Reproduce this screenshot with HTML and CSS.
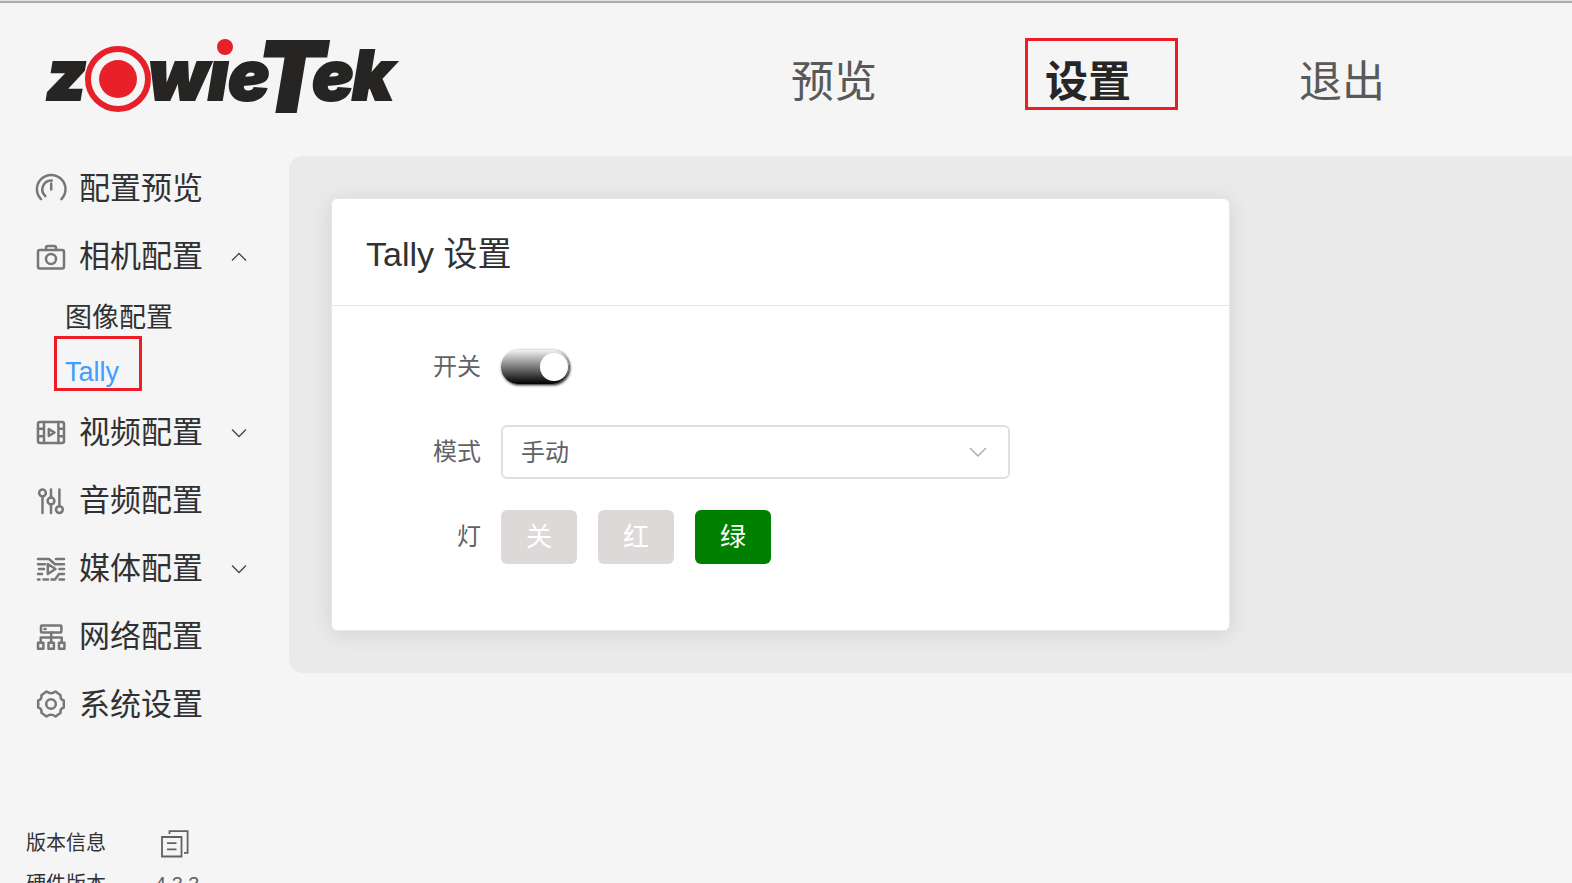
FILE: index.html
```html
<!DOCTYPE html>
<html lang="zh-CN">
<head>
<meta charset="utf-8">
<title>Tally 设置</title>
<link rel="stylesheet" href="styles.css">
</head>
<body>
<header class="header">
  <a class="logo" href="#" aria-label="ZowieTek">
    <svg width="356" height="86" viewBox="0 0 356 86">
      <text class="logo-letters" y="64"><tspan x="2">z</tspan><tspan x="104">w</tspan><tspan x="164">ı</tspan><tspan x="184">e</tspan><tspan class="logo-big" x="213" y="76">T</tspan><tspan x="268" y="64">e</tspan><tspan x="308">k</tspan></text>
      <circle cx="74" cy="43" r="30" fill="#f5f5f5" stroke="#e8202a" stroke-width="6"/>
      <circle cx="74" cy="43" r="19" fill="#e8202a"/>
      <circle cx="181" cy="11" r="8" fill="#e8202a"/>
    </svg>
  </a>
  <nav class="topnav">
    <a class="topnav-link" href="#">预览</a>
    <a class="topnav-link active" href="#">设置<span class="mark mark-top"></span></a>
    <a class="topnav-link" href="#">退出</a>
  </nav>
</header>
<div class="layout">
  <aside class="sidebar">
    <nav class="menu">
      <a class="menu-item" href="#">
        <svg class="icon" viewBox="0 0 32 32"><path d="M6 26.2A14.3 14.3 0 1 1 26.4 26.2M10.4 23.2A9 9 0 0 1 16.8 7.5M16.2 10.5V16.5"/></svg>
        <span>配置预览</span>
      </a>
      <a class="menu-item" href="#">
        <svg class="icon" viewBox="0 0 32 32"><rect x="3" y="9" width="26" height="18.5" rx="2"/><path d="M11 9V7q0-2 2-2h6q2 0 2 2v2"/><circle cx="16" cy="18" r="5"/></svg>
        <span>相机配置</span>
        <svg class="chevron" viewBox="0 0 16 16"><path d="M1 11.5L8 4.5L15 11.5"/></svg>
      </a>
      <div class="submenu">
        <a class="submenu-item" href="#">图像配置</a>
        <a class="submenu-item current" href="#">Tally<span class="mark mark-side"></span></a>
      </div>
      <a class="menu-item" href="#">
        <svg class="icon" viewBox="0 0 32 32"><rect x="3" y="5" width="26" height="21" rx="2"/><path d="M9 5V26M23.4 5V26M3 11.8H9M3 19.2H9M23.4 11.8H29M23.4 19.2H29M13.8 12V19L19.5 15.5Z"/></svg>
        <span>视频配置</span>
        <svg class="chevron" viewBox="0 0 16 16"><path d="M1 4.5L8 11.5L15 4.5"/></svg>
      </a>
      <a class="menu-item" href="#">
        <svg class="icon" viewBox="0 0 32 32"><circle cx="7.5" cy="8" r="3.4"/><path d="M7.5 11.4V28M16 4.5V12.6M16 19.4V28M24.4 4.5V21.3"/><circle cx="16" cy="16" r="3.4"/><circle cx="24.4" cy="24.6" r="3.4"/></svg>
        <span>音频配置</span>
      </a>
      <a class="menu-item" href="#">
        <svg class="icon" viewBox="0 0 32 32"><path d="M3 6H14L20 11.3H29M21 6H29M3 11.3H10M4 16H9M24.5 16H29M12.8 11V21L20.5 16ZM3 21H7M3 26.4H4.5M8.5 26.4H13M16.5 26.4H20L24 21H29M24.5 26.4H29"/></svg>
        <span>媒体配置</span>
        <svg class="chevron" viewBox="0 0 16 16"><path d="M1 4.5L8 11.5L15 4.5"/></svg>
      </a>
      <a class="menu-item" href="#">
        <svg class="icon" viewBox="0 0 32 32"><rect x="6" y="4.6" width="20.4" height="7" rx="1"/><path d="M9.5 8.1H10.5M16.2 11.6V21.6M5.7 21.6V16.4H26.7V21.6"/><rect x="3" y="21.8" width="5.4" height="6"/><rect x="13.5" y="21.8" width="5.4" height="6"/><rect x="24" y="21.8" width="5.4" height="6"/></svg>
        <span>网络配置</span>
      </a>
      <a class="menu-item" href="#">
        <svg class="icon" viewBox="-16 -15 32 32"><path d="M12.8 3.5Q8.8 4.6 9.6 8.8L4.6 12.4Q0 9-4.6 12.4L-9.6 8.8Q-8.8 4.6-12.8 3.5V-3.5Q-8.8-4.6-9.6-8.8L-4.6-12.4Q0-9 4.6-12.4L9.6-8.8Q8.8-4.6 12.8-3.5Z"/><circle r="4.8"/></svg>
        <span>系统设置</span>
      </a>
    </nav>
    <dl class="version">
      <div class="version-row">
        <dt>版本信息</dt>
        <dd>
          <button class="copy" type="button" aria-label="复制版本信息">
            <svg width="28" height="28" viewBox="0 0 28 28"><path d="M1 7H20.5V26.5H1ZM8.5 4V1.2H26.6V22.8H23M6 13.2H15.5M6 19.4H15.5"/></svg>
          </button>
        </dd>
      </div>
      <div class="version-row">
        <dt>硬件版本</dt>
        <dd>4.3.3</dd>
      </div>
    </dl>
  </aside>
  <main class="panel">
    <section class="card">
      <h1 class="card-title">Tally 设置</h1>
      <form class="form">
        <div class="row">
          <label class="label" for="power">开关</label>
          <input class="switch" id="power" type="checkbox" role="switch" checked>
        </div>
        <div class="row">
          <label class="label" for="mode">模式</label>
          <div class="select-wrap">
            <select class="select" id="mode"><option>手动</option></select>
            <svg class="select-arrow" viewBox="0 0 18 18"><path d="M1 5L9 13L17 5"/></svg>
          </div>
        </div>
        <div class="row" role="group" aria-labelledby="lamp">
          <span class="label" id="lamp">灯</span>
          <div class="lamps">
            <button class="lamp" type="button">关</button>
            <button class="lamp" type="button">红</button>
            <button class="lamp lamp-green" type="button">绿</button>
          </div>
        </div>
      </form>
    </section>
  </main>
</div>
</body>
</html>
```
FILE: styles.css
```css
* {
  box-sizing: border-box;
}

body {
  margin: 0;
  height: 100vh;
  overflow: hidden;
  background: #f5f5f5;
  border-top: 1px solid #dfe1e4;
  color: #303133;
  font-family: "Liberation Sans", "Noto Sans CJK SC", sans-serif;
}

a {
  color: inherit;
  text-decoration: none;
}

.header {
  display: flex;
  align-items: center;
  justify-content: space-between;
  height: 154px;
  padding: 0 103px 0 44px;
  border-top: 2px solid #a9acb0;
}

.logo svg {
  display: block;
  overflow: visible;
}

.logo-letters {
  fill: #262524;
  stroke: #262524;
  stroke-width: 2px;
  font-family: Inter, sans-serif;
  font-size: 69px;
  font-style: italic;
  font-weight: 900;
}

.logo-big {
  font-size: 98px;
}

.topnav {
  display: flex;
  padding-top: 6px;
}

.topnav-link {
  position: relative;
  width: 254px;
  font-size: 43px;
  line-height: 72px;
  text-align: center;
  color: #595959;
}

.topnav-link.active {
  color: #262626;
  font-weight: 700;
}

.mark {
  position: absolute;
  border: 3px solid #ee1c25;
  pointer-events: none;
}

.mark-top {
  top: -8px;
  left: 64px;
  width: 153px;
  height: 72px;
}

.mark-side {
  top: -9px;
  left: 54px;
  width: 88px;
  height: 55px;
}

.layout {
  display: flex;
  align-items: flex-start;
}

.sidebar {
  flex: 0 0 289px;
}

.menu-item {
  display: flex;
  align-items: center;
  height: 68px;
  padding: 0 42px 0 35px;
  font-size: 31px;
  line-height: 68px;
}

.icon {
  width: 32px;
  height: 32px;
  margin-right: 12px;
  fill: none;
  stroke: #777;
  stroke-width: 2.5;
  stroke-linecap: round;
  stroke-linejoin: round;
}

.chevron {
  width: 16px;
  height: 16px;
  margin-left: auto;
  fill: none;
  stroke: #444;
  stroke-width: 1.3;
}

.submenu-item {
  display: block;
  position: relative;
  padding-left: 65px;
  font-size: 27px;
  line-height: 54px;
}

.submenu-item.current {
  color: #409eff;
}

.version {
  margin: 83px 0 0;
  padding-left: 26px;
  font-size: 20px;
  line-height: 40px;
}

.version-row {
  display: flex;
  align-items: center;
  height: 41px;
}

.version dt {
  width: 129px;
}

.version dd {
  margin: 0;
  color: #606266;
}

.copy {
  display: block;
  margin: 3px 0 0 6px;
  padding: 0;
  border: 0;
  background: none;
}

.copy svg {
  display: block;
  fill: none;
  stroke: #606266;
  stroke-width: 1.8;
}

.panel {
  flex: 1;
  margin-top: 1px;
  padding: 42px;
  background: #eaeaea;
  border-radius: 14px 0 0 14px;
}

.card {
  width: 75%;
  background: #fff;
  border: 1px solid #e4e7ed;
  border-radius: 6px;
  box-shadow: 0 3px 22px rgba(0, 0, 0, 0.1);
}

.card-title {
  margin: 0;
  padding: 30px 34px 26px;
  border-bottom: 1px solid #e4e7ed;
  font-size: 34px;
  font-weight: 400;
  line-height: 50px;
}

.form {
  display: flex;
  flex-direction: column;
  gap: 31px;
  padding: 34px 34px 66px;
}

.row {
  display: flex;
  align-items: center;
  min-height: 54px;
  gap: 20px;
}

.label {
  flex: 0 0 115px;
  font-size: 24px;
  line-height: 54px;
  text-align: right;
  color: #606266;
}

.switch {
  display: flex;
  align-items: center;
  justify-content: flex-end;
  appearance: none;
  width: 68px;
  height: 34px;
  margin: 0;
  padding: 0 1px 1px;
  border-radius: 17px;
  background: linear-gradient(#f2f2f2, #000);
  box-shadow: 1px 1px 3px #000;
}

.switch::before {
  content: "";
  width: 28px;
  height: 28px;
  border-radius: 50%;
  background: #fff;
}

.select-wrap {
  position: relative;
  flex: 0 1 509px;
}

.select {
  appearance: none;
  display: block;
  width: 100%;
  height: 54px;
  padding: 0 18px;
  border: 2px solid #dcdfe6;
  border-radius: 6px;
  background: #fff;
  color: #606266;
  font: inherit;
  font-size: 24px;
}

.select-arrow {
  position: absolute;
  top: 18px;
  right: 23px;
  width: 18px;
  height: 18px;
  fill: none;
  stroke: #a8abb2;
  stroke-width: 1.4;
  pointer-events: none;
}

.lamps {
  display: flex;
  gap: 21px;
}

.lamp {
  width: 76px;
  height: 54px;
  padding: 0;
  border: 0;
  border-radius: 6px;
  background: #ded9d9;
  color: #fff;
  font: inherit;
  font-size: 26px;
  line-height: 54px;
}

.lamp-green {
  background: #008000;
}
```
